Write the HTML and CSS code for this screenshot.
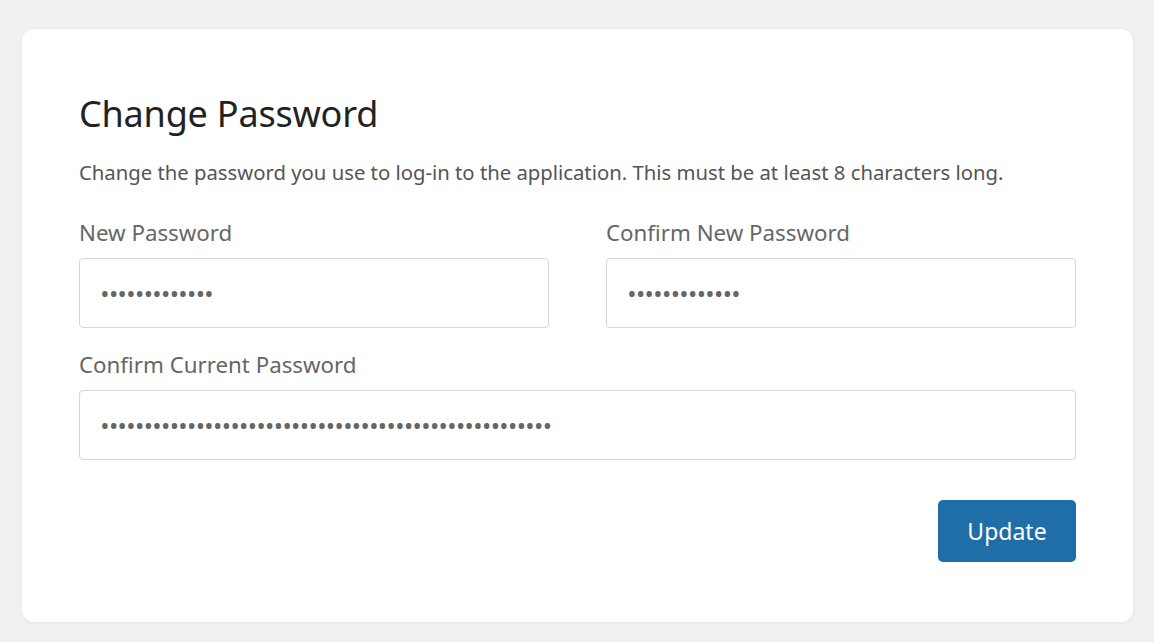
FILE: index.html
```html
<!DOCTYPE html>
<html lang="en">
<head>
<meta charset="utf-8">
<title>Change Password</title>
<link rel="stylesheet" href="styles.css">
</head>
<body>
<main class="page">
  <form class="card" onsubmit="return false">
    <h1 class="title">Change Password</h1>
    <p class="desc">Change the password you use to log-in to the application. This must be at least 8 characters long.</p>
    <div class="row two">
      <label class="field">
        <span class="label">New Password</span>
        <input class="input" type="password" value="abcdefghijklm">
      </label>
      <label class="field">
        <span class="label">Confirm New Password</span>
        <input class="input" type="password" value="abcdefghijklm">
      </label>
    </div>
    <div class="row">
      <label class="field">
        <span class="label">Confirm Current Password</span>
        <input class="input" type="password" value="abcdefghijklmnopqrstuvwxyzabcdefghijklmnopqrstuvwxyz">
      </label>
    </div>
    <div class="actions">
      <button class="btn" type="submit">Update</button>
    </div>
  </form>
</main>
</body>
</html>
```

FILE: styles.css
```css
* { box-sizing: border-box; }
html, body { margin: 0; padding: 0; }
body {
  background: #f1f1f1;
  font-family: "Noto Sans", "Open Sans", sans-serif;
  width: 1154px;
  height: 642px;
  overflow: hidden;
}
.page {
  padding: 29px 21px 20px 22px;
}
.card {
  background: #ffffff;
  border-radius: 12px;
  box-shadow: 0 1px 4px rgba(0,0,0,0.06);
  height: 593px;
  padding: 55px 57px 60px 57px;
}
.title {
  margin: 0;
  font-size: 36px;
  line-height: 60px;
  font-weight: 400;
  color: #222222;
  letter-spacing: -0.2px;
}
.desc {
  margin: 13px 0 0;
  font-size: 20.3px;
  line-height: 30px;
  color: #555555;
}
.row {
  margin-top: 22px;
}
.row.two {
  display: grid;
  grid-template-columns: 1fr 1fr;
  column-gap: 57px;
  margin-top: 31px;
}
.field {
  display: flex;
  flex-direction: column;
}
.label {
  font-size: 22.3px;
  line-height: 30px;
  color: #666666;
  margin-bottom: 10px;
}
.input {
  height: 70px;
  border: 1px solid #d6d6d6;
  border-radius: 4px;
  padding: 0 20px;
  font-family: "Open Sans", sans-serif;
  font-size: 26px;
  letter-spacing: -1.1px;
  color: #666666;
  background: #fff;
  outline: none;
}
.actions {
  display: flex;
  justify-content: flex-end;
  margin-top: 40px;
}
.btn {
  width: 138px;
  height: 62px;
  border: 0;
  border-radius: 5px;
  background: #1f6ea8;
  color: #ffffff;
  font-family: "Noto Sans", sans-serif;
  font-size: 23px;
  cursor: pointer;
}
```
